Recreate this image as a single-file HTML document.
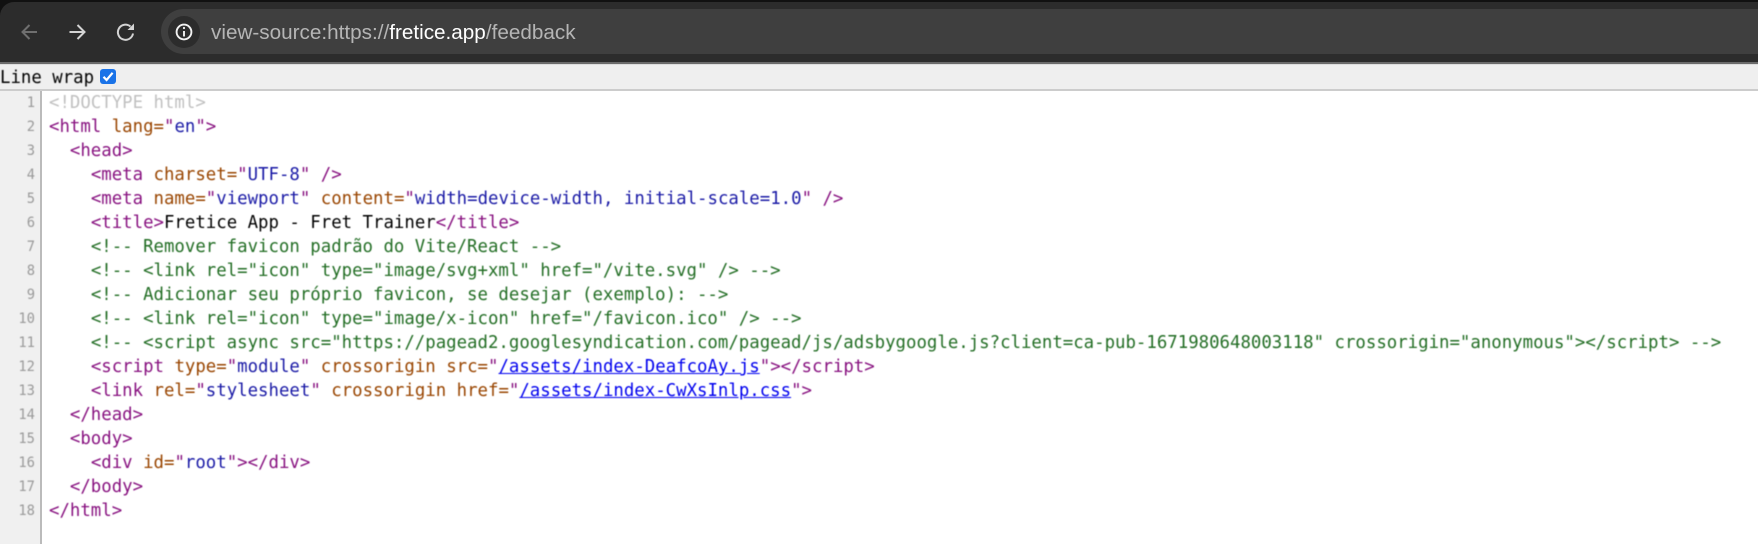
<!DOCTYPE html>
<html lang="en"><head><meta charset="utf-8"><title>view-source</title>
<style>
*{box-sizing:border-box}
html,body{margin:0;padding:0;width:1758px;height:544px;overflow:hidden;background:#fff}
.abs{position:absolute}
#corner{left:0;top:0;width:16px;height:20px;background:#111}
#top{left:0;top:0;width:1758px;height:3px;background:#111}
#bar{left:0;top:2px;width:1758px;height:61px;background:#2c2c2c;border-top-left-radius:14px}
#edge{left:0;top:62px;width:1758px;height:2px;background:#6b6b6b}
#omni{left:161px;top:9px;width:1597px;height:45px;background:#3f3f3f;border-radius:23px 0 0 23px}
#chip{left:168px;top:16px;width:32px;height:32px;background:#2c2c2c;border-radius:50%}
#url{left:211px;top:21px;font:20.7px/24px "Liberation Sans",sans-serif;color:#b5b5b5;white-space:pre;filter:blur(.35px)}
#url b{font-weight:400;color:#fff}
#wrap{left:0;top:64px;width:1758px;height:27px;background:#efefef;border-top:1px solid #ddd;border-bottom:2px solid #ccc}
.m{font-family:"DejaVu Sans Mono",monospace;font-size:17.38px;white-space:pre;filter:blur(.4px)}
#lw{left:0;top:66px;line-height:24px;color:#000}
#cb{left:100px;top:69px;width:16px;height:15px;background:#1a73e8;border-radius:3px}
#gut{left:0;top:91px;width:42px;height:453px;background:#f0f0f0;border-right:2px solid #bbb}
#nums{left:0;top:91px;width:35px;text-align:right;font:13.8px/24px "DejaVu Sans Mono",monospace;color:#999;filter:blur(.4px)}
#code{left:49px;top:91px;line-height:24px;color:#000}
i{font-style:normal}
.t{color:#881280}.a{color:#994500}.v{color:#1a1aa6}.c{color:#236e25}.d{color:#c0c0c0}
.l{color:#0000ee;text-decoration:underline}
</style></head><body>
<div class="abs" id="corner"></div>
<div class="abs" id="top"></div>
<div class="abs" id="bar"></div>
<div class="abs" id="edge"></div>
<div class="abs" id="omni"></div>
<div class="abs" id="chip"></div>
<svg class="abs" style="left:0;top:0" width="220" height="64" fill="none" stroke-linecap="butt">
<path d="M37 32H23M29.5 25L22.5 32L29.5 39" stroke="#6f6f6f" stroke-width="2"/>
<path d="M69.5 32H84.5M77.5 25L84.5 32L77.5 39" stroke="#d4d4d4" stroke-width="2"/>
<path d="M133 33.5A7.6 7.6 0 1 1 130.5 26.5" stroke="#d4d4d4" stroke-width="2"/>
<path d="M134 23.5V30H127.5Z" fill="#d4d4d4"/>
<circle cx="184" cy="32" r="7.4" stroke="#f2f2f2" stroke-width="1.9"/>
<path d="M184 31V36.5" stroke="#f2f2f2" stroke-width="1.9"/>
<circle cx="184" cy="28" r="1.1" fill="#f2f2f2"/>
</svg>
<div class="abs" id="url">view-source:https://<b>fretice.app</b>/feedback</div>
<div class="abs" id="wrap"></div>
<div class="abs m" id="lw">Line wrap</div>
<div class="abs" id="cb"></div>
<svg class="abs" style="left:100px;top:69px" width="16" height="15" fill="none"><path d="M3.5 7.8L6.6 11L12.6 3.8" stroke="#fff" stroke-width="2.2"/></svg>
<div class="abs" id="gut"></div>
<div class="abs" id="nums">1<br>2<br>3<br>4<br>5<br>6<br>7<br>8<br>9<br>10<br>11<br>12<br>13<br>14<br>15<br>16<br>17<br>18</div>
<div class="abs m" id="code"><i class="d">&lt;!DOCTYPE html&gt;</i>
<i class="t">&lt;html</i> <i class="a">lang=</i><i class="t">"</i><i class="v">en</i><i class="t">"&gt;</i>
  <i class="t">&lt;head&gt;</i>
    <i class="t">&lt;meta</i> <i class="a">charset=</i><i class="t">"</i><i class="v">UTF-8</i><i class="t">" /&gt;</i>
    <i class="t">&lt;meta</i> <i class="a">name=</i><i class="t">"</i><i class="v">viewport</i><i class="t">"</i> <i class="a">content=</i><i class="t">"</i><i class="v">width=device-width, initial-scale=1.0</i><i class="t">" /&gt;</i>
    <i class="t">&lt;title&gt;</i>Fretice App - Fret Trainer<i class="t">&lt;/title&gt;</i>
    <i class="c">&lt;!-- Remover favicon padrão do Vite/React --&gt;</i>
    <i class="c">&lt;!-- &lt;link rel="icon" type="image/svg+xml" href="/vite.svg" /&gt; --&gt;</i>
    <i class="c">&lt;!-- Adicionar seu próprio favicon, se desejar (exemplo): --&gt;</i>
    <i class="c">&lt;!-- &lt;link rel="icon" type="image/x-icon" href="/favicon.ico" /&gt; --&gt;</i>
    <i class="c">&lt;!-- &lt;script async src="https://pagead2.googlesyndication.com/pagead/js/adsbygoogle.js?client=ca-pub-1671980648003118" crossorigin="anonymous"&gt;&lt;/script&gt; --&gt;</i>
    <i class="t">&lt;script</i> <i class="a">type=</i><i class="t">"</i><i class="v">module</i><i class="t">"</i> <i class="a">crossorigin src=</i><i class="t">"</i><i class="l">/assets/index-DeafcoAy.js</i><i class="t">"&gt;&lt;/script&gt;</i>
    <i class="t">&lt;link</i> <i class="a">rel=</i><i class="t">"</i><i class="v">stylesheet</i><i class="t">"</i> <i class="a">crossorigin href=</i><i class="t">"</i><i class="l">/assets/index-CwXsInlp.css</i><i class="t">"&gt;</i>
  <i class="t">&lt;/head&gt;</i>
  <i class="t">&lt;body&gt;</i>
    <i class="t">&lt;div</i> <i class="a">id=</i><i class="t">"</i><i class="v">root</i><i class="t">"&gt;&lt;/div&gt;</i>
  <i class="t">&lt;/body&gt;</i>
<i class="t">&lt;/html&gt;</i></div>
</body></html>
